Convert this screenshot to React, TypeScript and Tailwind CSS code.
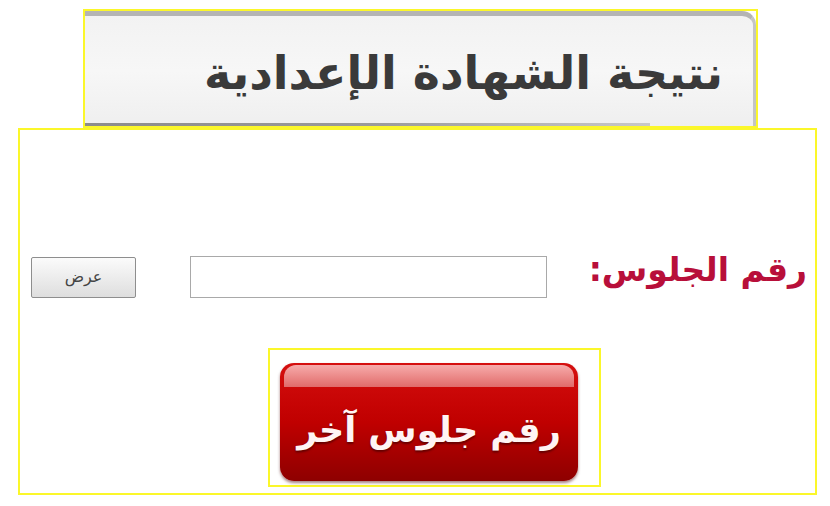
const arabic = { fontFamily: '"DejaVu Sans", "Noto Sans", sans-serif' }

function Header() {
  return (
    <div className="ml-[83px] mt-[9px] h-[119px] w-[675px] border-2 border-[#fbf72a] bg-white">
      <div className="flex h-full flex-col rounded-tr-[14px] border-r-[3px] border-t-[5px] border-r-[#c4c4c4] border-t-[#b4b4b4] bg-gradient-to-b from-[#f2f2f2] via-[#f7f7f7] to-[#efefef]">
        <div className="flex flex-1 items-center justify-end pr-[30px] pt-[6px]">
          <h1 dir="rtl" className="text-[46px] font-bold leading-none tracking-[-1.2px] text-[#3a3a3a]" style={arabic}>
            نتيجة الشهادة الإعدادية
          </h1>
        </div>
        <div className="h-[3px] w-[565px] bg-gradient-to-r from-[#8c8c8c] via-[#9a9a9a] to-[#c8c8c8]" />
      </div>
    </div>
  )
}

function SearchRow() {
  return (
    <div className="flex h-[42px] items-center pl-[11px]">
      <button
        className="h-[41px] w-[105px] rounded-[2px] border border-[#8e8e8e] bg-gradient-to-b from-[#fbfbfb] to-[#dedede] text-[16px] text-[#444]"
        style={arabic}
      >
        عرض
      </button>
      <input
        className="ml-[54px] h-[42px] w-[357px] border border-[#a9a9a9] bg-white"
        type="text"
      />
      <span dir="rtl" className="mb-[16px] ml-auto mr-[8px] text-[33px] font-bold leading-none text-[#b80f3a]" style={arabic}>
        رقم الجلوس:
      </span>
    </div>
  )
}

function AnotherButton() {
  return (
    <div className="ml-[248px] flex h-[139px] w-[333px] items-start border-2 border-[#fbf72a] pl-[10px] pt-[13px]">
      <button className="relative h-[118px] w-[298px] overflow-hidden rounded-[14px] bg-gradient-to-b from-[#d50f0f] via-[#c00000] to-[#8e0000] shadow-[0_2px_3px_rgba(80,0,0,0.5)]">
        <span className="absolute left-[4px] right-[4px] top-[2px] h-[22px] rounded-t-[12px] bg-gradient-to-b from-[#f6abab] to-[#e06a6a]" />
        <span
          dir="rtl"
          className="relative top-[8px] text-[35px] font-bold text-[#fff4f4] [text-shadow:0_2px_2px_rgba(60,0,0,0.6)]"
          style={arabic}
        >
          رقم جلوس آخر
        </span>
      </button>
    </div>
  )
}

export default function App() {
  return (
    <div className="h-[506px] w-[830px] overflow-hidden bg-white">
      <Header />
      <div className="ml-[18px] h-[367px] w-[799px] border-2 border-[#fbf72a] pt-[126px]">
        <SearchRow />
        <div className="mt-[50px]">
          <AnotherButton />
        </div>
      </div>
    </div>
  )
}
